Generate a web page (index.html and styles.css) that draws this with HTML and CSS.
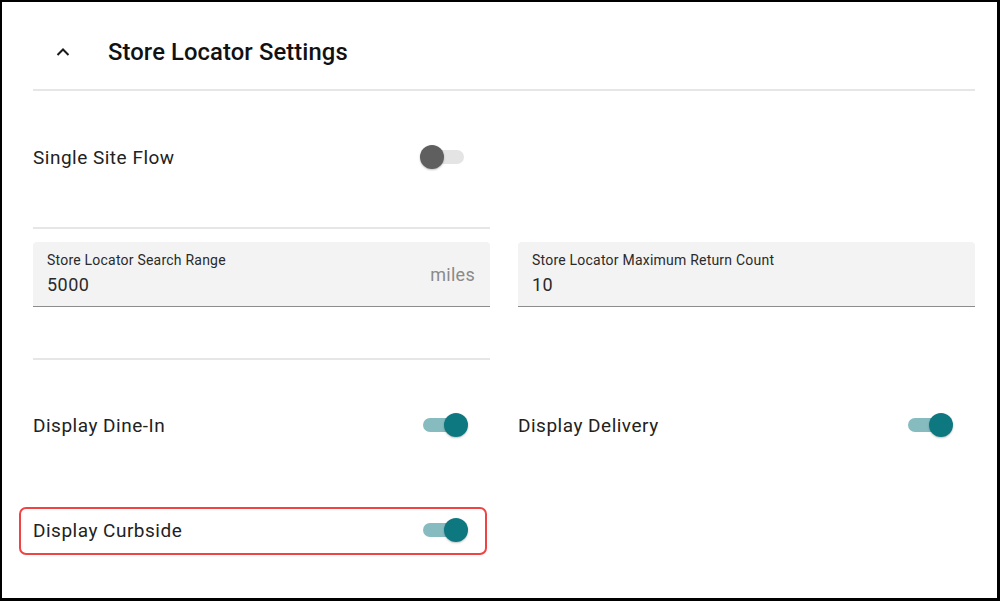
FILE: index.html
```html
<!DOCTYPE html>
<html lang="en">
<head>
<meta charset="utf-8">
<title>Store Locator Settings</title>
<link rel="stylesheet" href="styles.css">
</head>
<body>
<div class="frame">
  <div class="header">
    <span class="chevron">
      <svg width="14" height="10" viewBox="0 0 14 10"><polyline points="1.5,8 7,2.5 12.5,8" fill="none" stroke="#1a1a1a" stroke-width="2"/></svg>
    </span>
    <h1 class="title">Store Locator Settings</h1>
  </div>
  <div class="divider"></div>

  <div class="grid">
    <div class="col">
      <div class="toggle-row first">
        <span class="toggle-label">Single Site Flow</span>
        <span class="switch"><span class="track"></span><span class="thumb"></span></span>
      </div>
      <div class="divider"></div>
    </div>
    <div class="col"></div>
  </div>

  <div class="grid fields">
    <div class="field">
      <div class="field-main">
        <div class="field-label">Store Locator Search Range</div>
        <div class="field-value">5000</div>
      </div>
      <div class="field-suffix">miles</div>
    </div>
    <div class="field">
      <div class="field-main">
        <div class="field-label">Store Locator Maximum Return Count</div>
        <div class="field-value">10</div>
      </div>
    </div>
  </div>

  <div class="grid">
    <div class="col">
      <div class="divider sep"></div>
    </div>
    <div class="col"></div>
  </div>

  <div class="grid toggles">
    <div class="toggle-row">
      <span class="toggle-label">Display Dine-In</span>
      <span class="switch on"><span class="track"></span><span class="thumb"></span></span>
    </div>
    <div class="toggle-row">
      <span class="toggle-label">Display Delivery</span>
      <span class="switch on"><span class="track"></span><span class="thumb"></span></span>
    </div>
    <div class="toggle-row highlight">
      <span class="toggle-label">Display Curbside</span>
      <span class="switch on"><span class="track"></span><span class="thumb"></span></span>
    </div>
    <div></div>
  </div>
</div>
</body>
</html>
```

FILE: styles.css
```css
* { box-sizing: border-box; }
html, body { margin: 0; padding: 0; background: #fff; }
body { font-family: Roboto, "Liberation Sans", Arial, sans-serif; color: #212121; }

.frame {
  width: 1000px;
  height: 601px;
  border-style: solid;
  border-color: #000;
  border-width: 2px 3px 3px 2px;
  padding: 0 22px 0 31px;
  overflow: hidden;
}

.header {
  height: 87px;
  display: flex;
  align-items: center;
  padding-top: 12px;
}
.chevron {
  display: flex;
  width: 14px;
  height: 10px;
  margin-left: 23px;
  margin-right: 38px;
}
.title {
  margin: 0;
  font-size: 23.8px;
  font-weight: 500;
  color: #111;
  letter-spacing: 0.1px;
}

.divider {
  height: 2px;
  background: #e6e6e6;
}

.grid {
  display: grid;
  grid-template-columns: 457px 457px;
  column-gap: 28px;
}

.toggle-row {
  position: relative;
  display: flex;
  align-items: center;
  justify-content: space-between;
  height: 48px;
  padding-right: 22px;
}
.toggle-row.first {
  margin-top: 42px;
  margin-bottom: 46px;
}
.toggle-label {
  font-size: 19px;
  letter-spacing: 0.5px;
  color: #222;
}

.switch {
  position: relative;
  display: block;
  width: 48px;
  height: 24px;
}
.switch .track {
  position: absolute;
  left: 3px;
  right: 4px;
  top: 5px;
  height: 14px;
  border-radius: 7px;
  background: #e4e4e4;
}
.switch .thumb {
  position: absolute;
  left: 0;
  top: 0;
  width: 24px;
  height: 24px;
  border-radius: 50%;
  background: #5f5f5f;
  box-shadow: 0 1px 2px rgba(0,0,0,0.25);
}
.switch.on .track { background: #86bcc0; }
.switch.on .thumb { left: 24px; background: #0e7880; }

.fields { margin-top: 13px; }
.field {
  display: flex;
  justify-content: space-between;
  background: #f3f3f3;
  border-radius: 4px 4px 0 0;
  border-bottom: 1px solid #8c8c8c;
  padding: 10px 15px 10px 14px;
}
.field-label {
  font-size: 14px;
  line-height: 16px;
  letter-spacing: 0.22px;
  color: #2a2a2a;
}
.field-value {
  margin-top: 6px;
  font-size: 18px;
  line-height: 22px;
  letter-spacing: 0.5px;
  color: #2a2a2a;
}
.field-suffix {
  align-self: center;
  margin-top: 2px;
  font-size: 18px;
  line-height: 22px;
  letter-spacing: 0.3px;
  color: #8a8a8a;
}

.sep { margin-top: 51px; }

.toggles { margin-top: 41px; row-gap: 57px; }

.highlight::after {
  content: "";
  position: absolute;
  top: 1px;
  bottom: -1px;
  left: -14px;
  right: 3px;
  border: 2px solid #f04343;
  border-radius: 7px;
  pointer-events: none;
}
```
